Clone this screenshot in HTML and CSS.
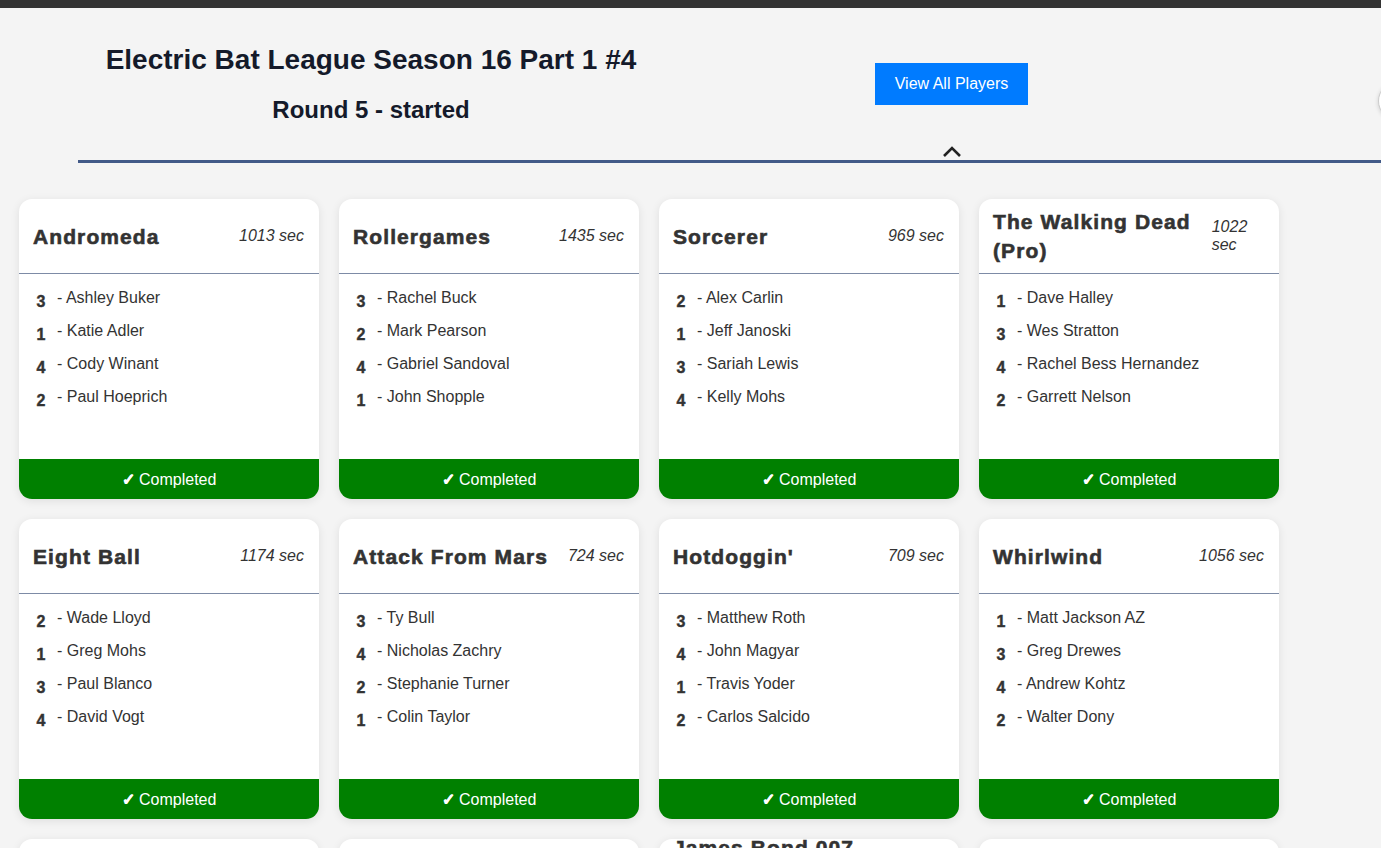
FILE: index.html
```html
<!DOCTYPE html>
<html lang="en">
<head>
<meta charset="utf-8">
<title>Electric Bat League Season 16 Part 1 #4</title>
<link rel="stylesheet" href="styles.css">
</head>
<body>
<div class="topbar"></div>
<div class="header-wrap">
  <header class="header">
    <div class="header-left">
      <h1 class="title">Electric Bat League Season 16 Part 1 #4</h1>
      <h2 class="subtitle">Round 5 - started</h2>
    </div>
    <div class="header-right">
      <button class="btn-players" type="button">View All Players</button>
      <svg class="chevron" width="20" height="14" viewBox="0 0 20 14" aria-hidden="true">
        <polyline points="2,12 10,4 18,12" fill="none" stroke="#222" stroke-width="2.6"/>
      </svg>
    </div>
    <div class="circle-btn"></div>
  </header>
</div>

<main class="grid">
  <section class="card">
    <div class="card-head"><h3 class="machine">Andromeda</h3><span class="time">1013 sec</span></div>
    <ul class="players">
      <li><b class="pos">3</b><span>- Ashley Buker</span></li>
      <li><b class="pos">1</b><span>- Katie Adler</span></li>
      <li><b class="pos">4</b><span>- Cody Winant</span></li>
      <li><b class="pos">2</b><span>- Paul Hoeprich</span></li>
    </ul>
    <div class="status"><b class="tick">✓</b> Completed</div>
  </section>
  <section class="card">
    <div class="card-head"><h3 class="machine">Rollergames</h3><span class="time">1435 sec</span></div>
    <ul class="players">
      <li><b class="pos">3</b><span>- Rachel Buck</span></li>
      <li><b class="pos">2</b><span>- Mark Pearson</span></li>
      <li><b class="pos">4</b><span>- Gabriel Sandoval</span></li>
      <li><b class="pos">1</b><span>- John Shopple</span></li>
    </ul>
    <div class="status"><b class="tick">✓</b> Completed</div>
  </section>
  <section class="card">
    <div class="card-head"><h3 class="machine">Sorcerer</h3><span class="time">969 sec</span></div>
    <ul class="players">
      <li><b class="pos">2</b><span>- Alex Carlin</span></li>
      <li><b class="pos">1</b><span>- Jeff Janoski</span></li>
      <li><b class="pos">3</b><span>- Sariah Lewis</span></li>
      <li><b class="pos">4</b><span>- Kelly Mohs</span></li>
    </ul>
    <div class="status"><b class="tick">✓</b> Completed</div>
  </section>
  <section class="card">
    <div class="card-head"><h3 class="machine">The Walking Dead (Pro)</h3><span class="time">1022 sec</span></div>
    <ul class="players">
      <li><b class="pos">1</b><span>- Dave Halley</span></li>
      <li><b class="pos">3</b><span>- Wes Stratton</span></li>
      <li><b class="pos">4</b><span>- Rachel Bess Hernandez</span></li>
      <li><b class="pos">2</b><span>- Garrett Nelson</span></li>
    </ul>
    <div class="status"><b class="tick">✓</b> Completed</div>
  </section>

  <section class="card">
    <div class="card-head"><h3 class="machine">Eight Ball</h3><span class="time">1174 sec</span></div>
    <ul class="players">
      <li><b class="pos">2</b><span>- Wade Lloyd</span></li>
      <li><b class="pos">1</b><span>- Greg Mohs</span></li>
      <li><b class="pos">3</b><span>- Paul Blanco</span></li>
      <li><b class="pos">4</b><span>- David Vogt</span></li>
    </ul>
    <div class="status"><b class="tick">✓</b> Completed</div>
  </section>
  <section class="card">
    <div class="card-head"><h3 class="machine">Attack From Mars</h3><span class="time">724 sec</span></div>
    <ul class="players">
      <li><b class="pos">3</b><span>- Ty Bull</span></li>
      <li><b class="pos">4</b><span>- Nicholas Zachry</span></li>
      <li><b class="pos">2</b><span>- Stephanie Turner</span></li>
      <li><b class="pos">1</b><span>- Colin Taylor</span></li>
    </ul>
    <div class="status"><b class="tick">✓</b> Completed</div>
  </section>
  <section class="card">
    <div class="card-head"><h3 class="machine">Hotdoggin'</h3><span class="time">709 sec</span></div>
    <ul class="players">
      <li><b class="pos">3</b><span>- Matthew Roth</span></li>
      <li><b class="pos">4</b><span>- John Magyar</span></li>
      <li><b class="pos">1</b><span>- Travis Yoder</span></li>
      <li><b class="pos">2</b><span>- Carlos Salcido</span></li>
    </ul>
    <div class="status"><b class="tick">✓</b> Completed</div>
  </section>
  <section class="card">
    <div class="card-head"><h3 class="machine">Whirlwind</h3><span class="time">1056 sec</span></div>
    <ul class="players">
      <li><b class="pos">1</b><span>- Matt Jackson AZ</span></li>
      <li><b class="pos">3</b><span>- Greg Drewes</span></li>
      <li><b class="pos">4</b><span>- Andrew Kohtz</span></li>
      <li><b class="pos">2</b><span>- Walter Dony</span></li>
    </ul>
    <div class="status"><b class="tick">✓</b> Completed</div>
  </section>

  <section class="card">
    <div class="card-head"><h3 class="machine">Medieval Madness</h3><span class="time"></span></div>
    <ul class="players"></ul>
    <div class="status"><b class="tick">✓</b> Completed</div>
  </section>
  <section class="card">
    <div class="card-head"><h3 class="machine">Black Knight</h3><span class="time"></span></div>
    <ul class="players"></ul>
    <div class="status"><b class="tick">✓</b> Completed</div>
  </section>
  <section class="card">
    <div class="card-head"><h3 class="machine">James Bond 007 (60th Anniversary Edition)</h3><span class="time">1000 sec</span></div>
    <ul class="players"></ul>
    <div class="status"><b class="tick">✓</b> Completed</div>
  </section>
  <section class="card">
    <div class="card-head"><h3 class="machine">Fish Tales</h3><span class="time"></span></div>
    <ul class="players"></ul>
    <div class="status"><b class="tick">✓</b> Completed</div>
  </section>
</main>
</body>
</html>
```
FILE: styles.css
```css
html {
  scrollbar-width: none;
}
html::-webkit-scrollbar,
body::-webkit-scrollbar {
  display: none;
}
body {
  margin: 0;
  background: #f4f4f4;
  font-family: "Liberation Sans", Arial, sans-serif;
  color: #333;
  overflow-x: hidden;
}
.topbar {
  height: 8px;
  background: #333;
}
.header-wrap {
  overflow: hidden;
}
.header {
  display: flex;
  align-items: flex-start;
  margin-left: 78px;
  border-bottom: 3px solid #425a88;
  width: 1500px;
}
.header-left {
  width: 586px;
  padding-top: 36px;
  text-align: center;
}
.title {
  margin: 0;
  font-size: 28px;
  line-height: 32px;
  font-weight: bold;
  color: #141a2a;
}
.subtitle {
  margin: 20px 0 0;
  font-size: 24px;
  line-height: 28px;
  font-weight: bold;
  color: #141a2a;
}
.header-right {
  width: 575px;
  padding-top: 55px;
  display: flex;
  flex-direction: column;
  align-items: center;
}
.btn-players {
  background: #007bff;
  color: #fff;
  border: none;
  font-family: "Liberation Sans", Arial, sans-serif;
  font-size: 16px;
  line-height: 18px;
  padding: 12px 16px;
  width: 153px;
  height: 42px;
  cursor: pointer;
}
.chevron {
  display: block;
  margin-top: 39px;
  margin-bottom: 2px;
}
.circle-btn {
  margin-left: 139px;
  margin-top: 74px;
  width: 36px;
  height: 36px;
  border-radius: 50%;
  background: #fff;
  border: 1px solid #ccc;
  box-shadow: 0 1px 4px rgba(0,0,0,0.15);
  flex: none;
}
.grid {
  display: grid;
  grid-template-columns: repeat(4, 300px);
  grid-auto-rows: 300px;
  gap: 20px;
  padding: 36px 19px 20px;
}
.card {
  background: #fff;
  border-radius: 13px;
  box-shadow: 0 2px 10px rgba(0,0,0,0.09);
  display: flex;
  flex-direction: column;
}
.card-head {
  box-sizing: border-box;
  height: 75px;
  flex: none;
  display: flex;
  align-items: center;
  gap: 10px;
  padding: 0 15px 0 14px;
  border-bottom: 1px solid #7d8ba6;
}
.machine {
  flex: 1 1 auto;
  margin: 0;
  font-size: 21px;
  line-height: 29px;
  font-weight: bold;
  letter-spacing: 1.1px;
  -webkit-text-stroke: 0.6px #333;
  color: #333;
}
.time {
  flex: 0 1 auto;
  font-style: italic;
  font-size: 16px;
  line-height: 18px;
  color: #333;
}
.players {
  list-style: none;
  margin: 0;
  padding: 15px 0 0 16px;
  flex: 1;
}
.players li {
  display: flex;
  align-items: flex-start;
  font-size: 16px;
  line-height: 18px;
  margin-bottom: 11px;
}
.pos {
  width: 12px;
  margin-right: 10px;
  margin-top: 4px;
  text-align: center;
  font-weight: bold;
  -webkit-text-stroke: 0.4px #333;
}
.status {
  flex: none;
  height: 40px;
  background: #008000;
  color: #fff;
  font-size: 16px;
  line-height: 41px;
  text-align: center;
  border-radius: 0 0 13px 13px;
}
.tick {
  font-weight: bold;
  -webkit-text-stroke: 0.5px #fff;
}
```
